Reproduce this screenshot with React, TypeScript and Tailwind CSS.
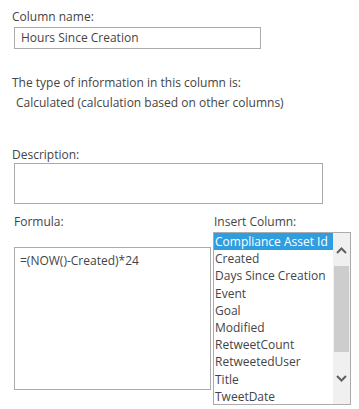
import React from 'react';

const columns = [
  'Compliance Asset Id',
  'Created',
  'Days Since Creation',
  'Event',
  'Goal',
  'Modified',
  'RetweetCount',
  'RetweetedUser',
  'Title',
  'TweetDate',
];

// Scrollbar arrow glyph
const Chevron: React.FC<{ up?: boolean }> = ({ up }) => (
  <svg width="11" height="7" viewBox="0 0 11 7" className="block">
    <path
      d={up ? 'M1 6 L5.5 1.5 L10 6' : 'M1 1 L5.5 5.5 L10 1'}
      fill="none"
      stroke="#606060"
      strokeWidth="2"
    />
  </svg>
);

export default function App() {
  return (
    <div
      className="w-[359px] h-[409px] bg-white text-[#444] text-[12px] leading-[17px] overflow-hidden"
      style={{ fontFamily: '"Open Sans", "Noto Sans", sans-serif' }}
    >
      <div className="pl-[12px] pt-[8px]">
        <div>Column name:</div>
        <div className="mt-[2px] ml-[2px] w-[247px] h-[22px] border border-[#ababab] px-[6px] leading-[20px]">
          Hours Since Creation
        </div>

        <div className="mt-[25px]">The type of information in this column is:</div>
        <div className="mt-[3px] pl-[4px]">Calculated (calculation based on other columns)</div>

        <div className="mt-[35px]">Description:</div>
        <div className="mt-[0px] ml-[2px] w-[309px] h-[41px] border border-[#ababab]" />

        <div className="flex mt-[9px]">
          <div className="w-[201px]">
            <div className="pl-[2px]">Formula:</div>
            <div className="mt-[17px] ml-[2px] w-[197px] h-[143px] border border-[#ababab] px-[5px] pt-[4px]">
              =(NOW()-Created)*24
            </div>
          </div>
          <div>
            <div className="pl-[1px]">Insert Column:</div>
            <div className="mt-[2px] w-[138px] h-[173px] border border-[#ababab] flex">
              <div className="flex-1 overflow-hidden">
                {columns.map((c, i) => (
                  <div
                    key={c}
                    className={
                      i === 0
                        ? 'bg-[#2f9ee0] text-white pl-[1px] h-[17.2px] whitespace-nowrap'
                        : 'pl-[1px] h-[17.2px] whitespace-nowrap'
                    }
                  >
                    {c}
                  </div>
                ))}
              </div>
              <div className="w-[17px] bg-[#f0f0f0] flex flex-col items-center">
                <div className="h-[33px] flex items-center justify-center pt-[2px]">
                  <Chevron up />
                </div>
                <div className="w-[15px] h-[86px] bg-[#cdcdcd]" />
                <div className="flex-1 flex items-center justify-center">
                  <Chevron />
                </div>
              </div>
            </div>
          </div>
        </div>
      </div>
    </div>
  );
}
